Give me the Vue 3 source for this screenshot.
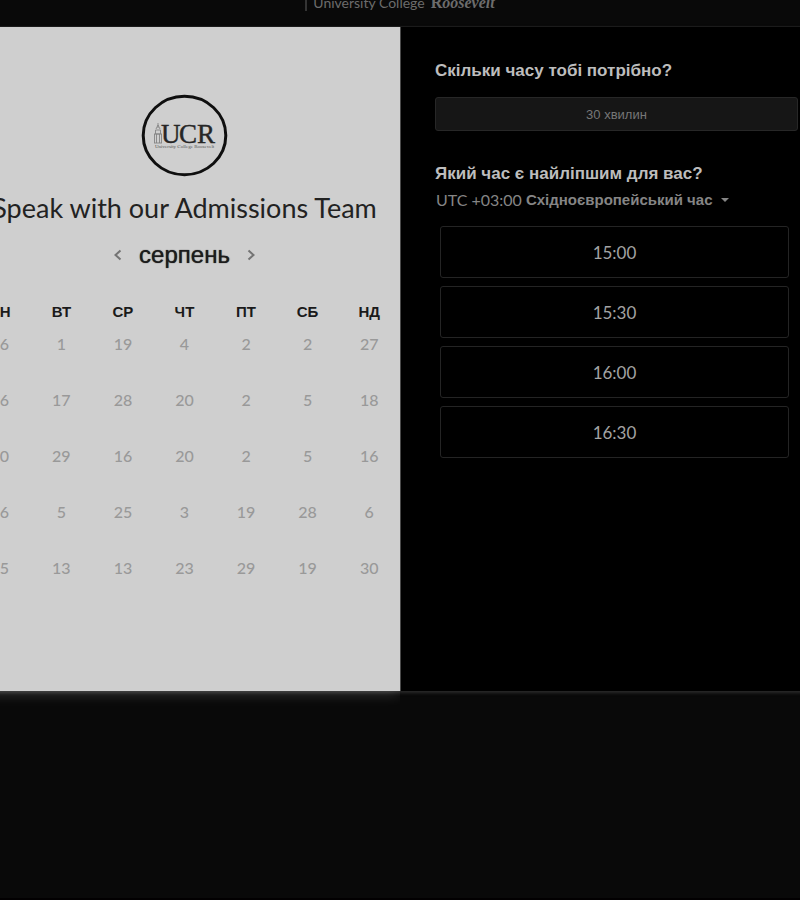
<script setup>
import { ref } from 'vue'

const weekdays = ['ПН', 'ВТ', 'СР', 'ЧТ', 'ПТ', 'СБ', 'НД']
const weeks = [
  [26, 1, 19, 4, 2, 2, 27],
  [26, 17, 28, 20, 2, 5, 18],
  [20, 29, 16, 20, 2, 5, 16],
  [26, 5, 25, 3, 19, 28, 6],
  [25, 13, 13, 23, 29, 19, 30],
]
const slots = ['15:00', '15:30', '16:00', '16:30']
const zone = ref('eet')
</script>

<template>
  <div class="page">
    <header class="brand">
      <span class="brand-sans">University College</span>
      <span class="brand-serif"><b>R</b>oosevelt</span>
    </header>

    <main class="scheduler">
      <section class="calendar">
        <svg class="logo" width="88" height="84" viewBox="0 0 88 84" role="img" aria-label="UCR">
          <ellipse cx="43.500" cy="42.500" rx="41.3" ry="39.2" fill="none" stroke="#0f0f0f" stroke-width="3" />
          <g fill="none" stroke="#858585" stroke-width="0.9">
            <path d="M17 30v5M15 36l2-4 2 4M14.500 37h5v4h-5zM13.500 41v9M15.500 41v9M18.500 41v9M20.500 41v9M13 50h8M13 41h8" />
          </g>
          <text class="logo-main" x="20" y="50">U<tspan x="38">C</tspan><tspan x="56">R</tspan></text>
          <text class="logo-sub" x="14" y="55">University College Roosevelt</text>
        </svg>
        <h1 class="title">Speak with our Admissions Team</h1>
        <div class="month">
          <button class="arrow" type="button" aria-label="Попередній місяць">
            <svg width="10" height="14" viewBox="0 0 10 14"><path d="M7.500 2.500L2.500 7l5 4.500" /></svg>
          </button>
          <h2 class="month-name">серпень</h2>
          <button class="arrow" type="button" aria-label="Наступний місяць">
            <svg width="10" height="14" viewBox="0 0 10 14"><path d="M2.500 2.500L7.500 7l-5 4.500" /></svg>
          </button>
        </div>
        <table class="days">
          <thead>
            <tr><th v-for="d in weekdays" :key="d" scope="col">{{ d }}</th></tr>
          </thead>
          <tbody>
            <tr v-for="(week, i) in weeks" :key="i">
              <td v-for="(day, j) in week" :key="j">{{ day }}</td>
            </tr>
          </tbody>
        </table>
      </section>

      <section class="times">
        <h2 class="question">Скільки часу тобі потрібно?</h2>
        <button class="duration" type="button">30 хвилин</button>
        <h2 class="question">Який час є найліпшим для вас?</h2>
        <div class="zone">
          <label for="zone">UTC +03:00</label>
          <span class="zone-pick">
            <select id="zone" v-model="zone">
              <option value="eet">Східноєвропейський час</option>
            </select>
            <svg width="8" height="4" viewBox="0 0 8 4" aria-hidden="true"><path d="M0 0h8L4 4z" /></svg>
          </span>
        </div>
        <div class="slots">
          <button v-for="s in slots" :key="s" class="slot" type="button">{{ s }}</button>
        </div>
      </section>
    </main>
  </div>
</template>

<style>
body {
  margin: 0;
  background: #090909;
}
</style>

<style scoped>
.page {
  box-sizing: border-box;
  min-height: 100vh;
  overflow: hidden;
  background: #090909;
  border-bottom: 2px solid #020001;
  font-family: "Liberation Sans", Arial, sans-serif;
}

.brand {
  display: flex;
  justify-content: center;
  align-items: center;
  gap: 6px;
  width: max-content;
  height: 16px;
  margin: -5px auto 15px;
  padding-left: 6px;
  border-left: 2px solid #343434;
  color: #6c6c6c;
  font-size: 14px;
  line-height: 16px;
}

.brand-sans {
  font-family: Lato, sans-serif;
}

.brand-serif {
  font-family: "Liberation Serif", serif;
  font-size: 16px;
  font-style: italic;
  font-weight: bold;
}

.brand-serif b {
  font-style: normal;
}

.scheduler {
  display: grid;
  grid-template-columns: 1fr 1fr;
  margin: 0 -31px;
  border-top: 1px solid #1b1b1b;
  background: #000;
  box-shadow: 0 2px 3px #2a2a2a;
}

.calendar {
  display: flex;
  flex-direction: column;
  align-items: center;
  padding: 66px 0 79px;
  background: #cfcfcf;
  box-shadow: 0 2px 14px rgba(255, 255, 255, 0.2);
  clip-path: inset(0 0 -24px 0);
}

.logo {
  display: block;
}

.logo-main {
  font: 27px "Liberation Serif", serif;
  fill: #262626;
  stroke: #262626;
  stroke-width: 0.4;
}

.logo-sub {
  font: 5px "Liberation Serif", serif;
  fill: #555;
}

.title {
  margin: 14px 0 0;
  color: #222;
  font: 400 27px/34px Lato, sans-serif;
  white-space: nowrap;
}

.month {
  display: flex;
  align-items: center;
  gap: 16px;
  margin-top: 15px;
}

.month-name {
  margin: 0;
  color: #1c1c1c;
  font-size: 24px;
  font-weight: 400;
  line-height: 30px;
  text-shadow: 0 0 1px #1c1c1c;
}

.arrow {
  display: flex;
  padding: 0;
  border: 0;
  background: none;
}

.arrow path {
  fill: none;
  stroke: #747474;
  stroke-width: 2;
}

.days {
  width: 100%;
  margin-top: 30px;
  table-layout: fixed;
  border-collapse: collapse;
}

.days th,
.days td {
  padding: 0;
  text-align: center;
  vertical-align: top;
}

.days th {
  height: 32px;
  color: #1a1a1a;
  font-size: 15px;
  line-height: 24px;
}

.days td {
  height: 56px;
  color: #999;
  font: 500 16px/24px Lato, sans-serif;
}

.times {
  padding: 33px 33px 32px 34px;
  border-left: 1px solid #4a4a4a;
}

.question {
  margin: 0;
  color: #bdbdbd;
  font-size: 17px;
  line-height: 22px;
}

.duration {
  display: block;
  width: 100%;
  height: 34px;
  margin: 15px 0 32px;
  padding: 0;
  border: 1px solid #272727;
  border-radius: 3px;
  background: #161616;
  color: #777;
  font: 13px "Liberation Sans", Arial, sans-serif;
}

.zone {
  display: flex;
  align-items: center;
  gap: 4px;
  margin-top: 4px;
  padding-left: 1px;
  color: #858585;
  font: 400 16px/22px Lato, sans-serif;
}

.zone-pick {
  display: flex;
  align-items: center;
  gap: 8px;
}

.zone-pick path {
  fill: #858585;
}

.zone select {
  appearance: none;
  padding: 0;
  border: 0;
  background: none;
  color: #858585;
  font: bold 15px/22px "Liberation Sans", Arial, sans-serif;
}

.slots {
  display: grid;
  gap: 8px;
  margin: 15px 9px 0 5px;
}

.slot {
  height: 52px;
  padding: 0;
  border: 1px solid #242424;
  border-radius: 3px;
  background: #000;
  color: #a3a3a3;
  font: 400 17px Lato, sans-serif;
}
</style>
